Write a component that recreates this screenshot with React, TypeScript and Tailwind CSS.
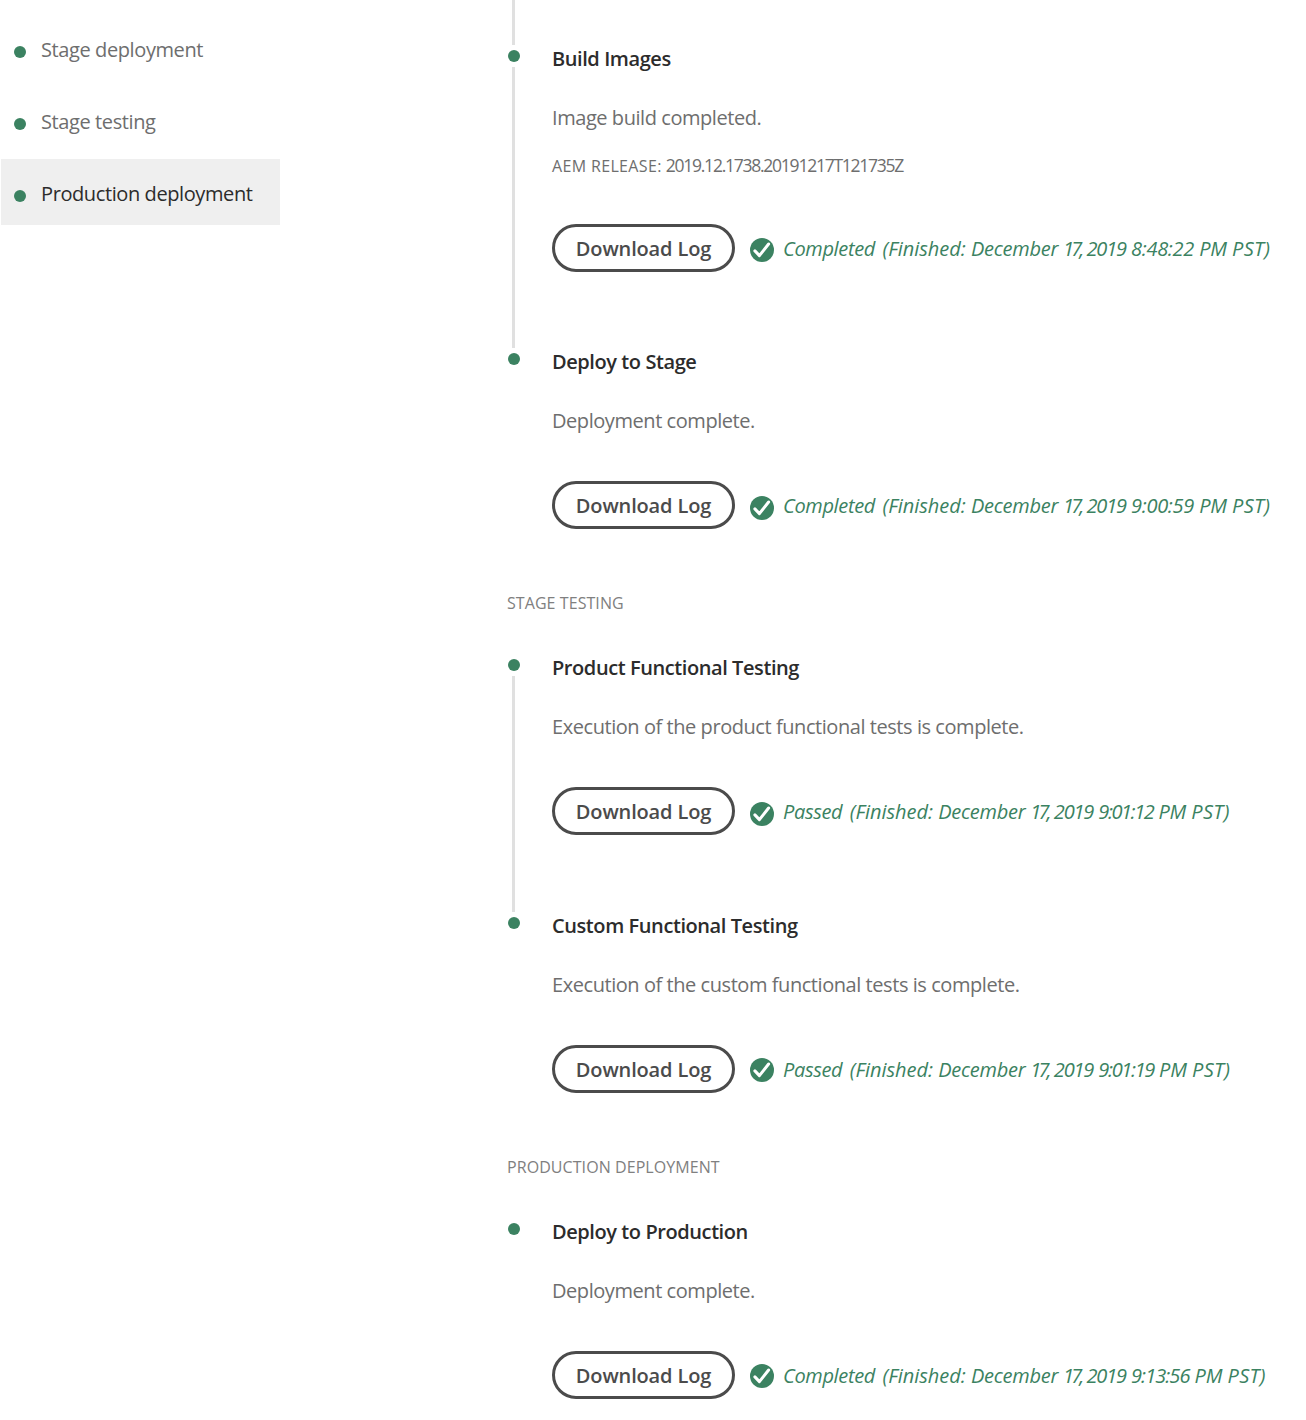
import type { ReactNode } from "react";

const GREEN_DOT = "rounded-full bg-[#3b8261]";

function NavItem({ label, active = false }: { label: string; active?: boolean }) {
  return (
    <li
      className={`flex h-[66px] items-center pl-[13px] ${active ? "bg-[#efefef] text-[#2c2c2c]" : "text-[#6e6e6e]"}`}
    >
      <span className={`mt-2 size-3 shrink-0 ${GREEN_DOT}`} />
      <span className="mt-1 ml-[15px] tracking-[-0.4px]">{label}</span>
    </li>
  );
}

function CheckCircle({ className }: { className: string }) {
  return (
    <svg viewBox="0 0 24 24" className={`size-6 shrink-0 ${className}`} aria-hidden="true">
      <circle cx="12" cy="12" r="12" fill="#3b8261" />
      <path d="M4.9 12.9l4.5 4.7L18.6 6" fill="none" stroke="#fff" strokeWidth="3" strokeLinecap="round" strokeLinejoin="round" />
    </svg>
  );
}

type StepProps = {
  title: string;
  description: string;
  status: string;
  clock: string;
  clockTracking?: string;
  iconOffset: string;
  bottom?: string;
  connected?: boolean;
  children?: ReactNode;
};

function Step({
  title,
  description,
  status,
  clock,
  clockTracking = "tracking-[-0.3px]",
  iconOffset,
  bottom = "",
  connected = false,
  children,
}: StepProps) {
  return (
    <section className="flex">
      <div className="flex w-[45px] shrink-0 flex-col">
        <span className={`my-[5px] ml-px size-3 shrink-0 ${GREEN_DOT}`} />
        {connected && <span className="ml-[5px] w-[3px] flex-1 bg-[#e0e0e0]" />}
      </div>
      <div className={bottom}>
        <h3 className="h-[59px] leading-7 font-semibold tracking-[-0.42px] text-[#2c2c2c]">{title}</h3>
        <p className="h-[74px] leading-7 tracking-[-0.44px] text-[#6e6e6e]">{description}</p>
        {children}
        <div className="flex h-12 items-center">
          <button className="h-12 w-[183px] rounded-full border-3 border-[#4b4b4b] pt-0.5 leading-none font-semibold tracking-[-0.15px] text-[#4b4b4b]">
            Download Log
          </button>
          <div className="ml-[15px] flex items-center text-[#3b8261] italic">
            <CheckCircle className={iconOffset} />
            <span className="mt-0.5 ml-[9px] tracking-[-0.35px]">{status}</span>
            <span className="mt-0.5 ml-[7.5px] whitespace-pre">
              <span className="tracking-[-0.03px]">(Finished: </span>
              <span className="tracking-[-0.25px]">December </span>
              <span className="tracking-[-2.9px]">17,</span>
              <span> </span>
              <span className="tracking-[-1.2px]">2019</span>
              <span> </span>
              <span className={clockTracking}>{clock}</span>
              <span className="tracking-[-0.1px]"> PM </span>
              <span className="tracking-[0.3px]">PST)</span>
            </span>
          </div>
        </div>
      </div>
    </section>
  );
}

function Group({ title, children }: { title: string; children: ReactNode }) {
  return (
    <>
      <h2 className="mt-[62px] mb-[39px] h-6 text-base leading-6 tracking-[0.07px] text-[#808080]">{title}</h2>
      {children}
    </>
  );
}

export default function App() {
  return (
    <div className="flex h-[1420px] w-[1306px] overflow-hidden bg-white font-['Open_Sans',sans-serif] text-xl">
      <nav className="ml-px w-[279px] shrink-0 pt-[15px]">
        <ul className="flex flex-col gap-1.5">
          <NavItem label="Stage deployment" />
          <NavItem label="Stage testing" />
          <NavItem label="Production deployment" active />
        </ul>
      </nav>
      <main className="ml-[227px] flex-1">
        <div className="ml-[5px] h-[45px] w-[3px] bg-[#e0e0e0]" />
        <Step
          connected
          bottom="pb-[76px]"
          title="Build Images"
          description="Image build completed."
          status="Completed"
          clock="8:48:22"
          iconOffset="mt-[3px]"
        >
          <p className="-mt-[26px] mb-[44px] flex h-7 items-center gap-1 text-[#6e6e6e]">
            <span className="text-base tracking-[0.35px]">AEM RELEASE:</span>
            <span className="-mt-0.5 text-[17.5px] tracking-[-1.25px]">2019.12.1738.20191217T121735Z</span>
          </p>
        </Step>
        <Step
          title="Deploy to Stage"
          description="Deployment complete."
          status="Completed"
          clock="9:00:59"
          iconOffset="mt-[5px]"
        />
        <Group title="STAGE TESTING">
          <Step
            connected
            bottom="pb-[77px]"
            title="Product Functional Testing"
            description="Execution of the product functional tests is complete."
            status="Passed"
            clock="9:01:12"
            clockTracking="tracking-[-1.45px]"
            iconOffset="mt-[5px]"
          />
          <Step
            title="Custom Functional Testing"
            description="Execution of the custom functional tests is complete."
            status="Passed"
            clock="9:01:19"
            clockTracking="tracking-[-1.35px]"
            iconOffset="mt-px"
          />
        </Group>
        <Group title="PRODUCTION DEPLOYMENT">
          <Step
            title="Deploy to Production"
            description="Deployment complete."
            status="Completed"
            clock="9:13:56"
            clockTracking="tracking-[-0.95px]"
            iconOffset="mt-px"
          />
        </Group>
      </main>
    </div>
  );
}
